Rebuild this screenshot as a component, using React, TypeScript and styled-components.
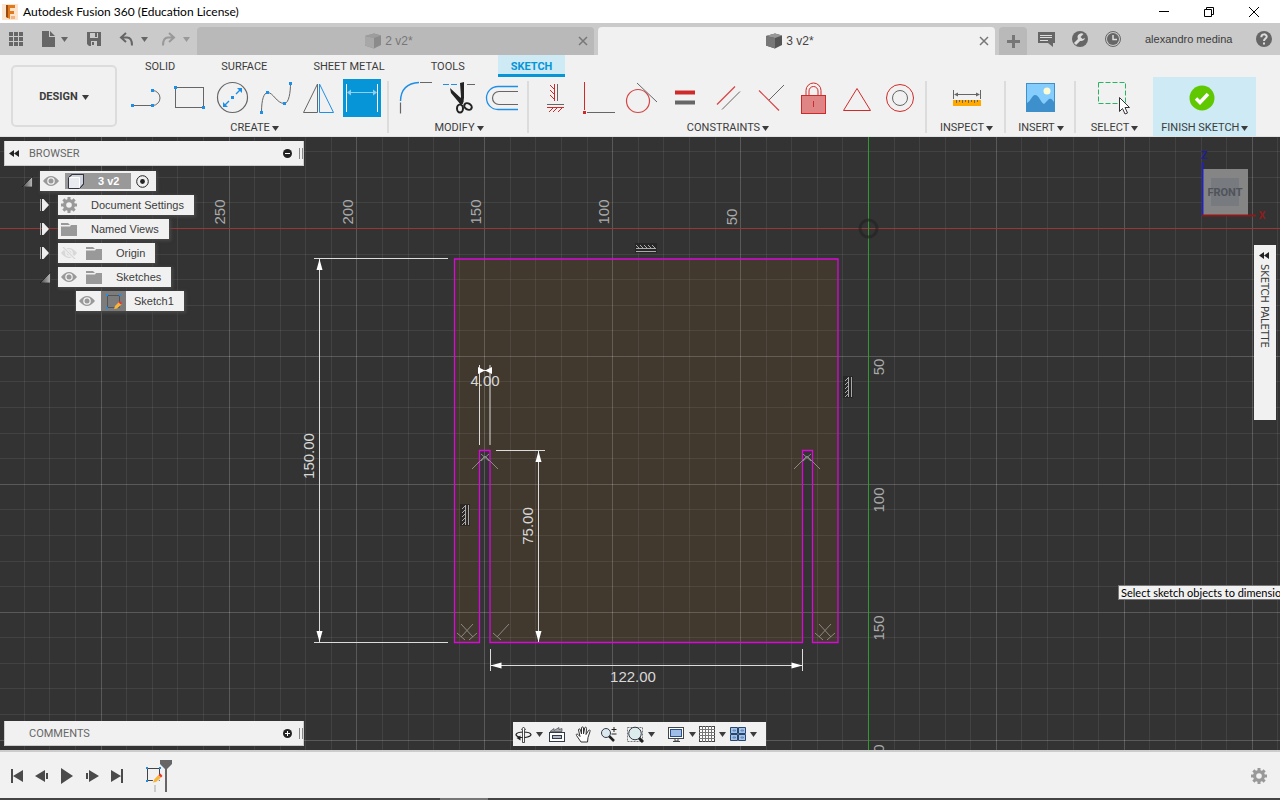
import React from "react";
import styled, { createGlobalStyle, css } from "styled-components";

const sans = `"Liberation Sans", Arial, sans-serif`;
const caps = `Roboto, "Liberation Sans", sans-serif`;
const system = `Lato, "Open Sans", sans-serif`;
const blue = "#0696d7";
const ink = "#3c3c3c";
const grey = "#666666";

const GlobalStyle = createGlobalStyle`
  * { box-sizing: border-box; }
  html, body, #root { height: 100%; }
  body { margin: 0; font: 11px/14px ${sans}; color: ${ink}; background: #333; }
  button { font: inherit; color: inherit; border: 0; padding: 0; margin: 0; background: none; cursor: pointer; }
  svg { display: block; flex: none; }
  ul { list-style: none; margin: 0; padding: 0; }
`;

const Window = styled.div`
  display: flex;
  flex-direction: column;
  min-height: 100%;
  overflow: hidden;
`;

/* ---------- title bar ---------- */
const TitleBar = styled.header`
  display: flex;
  align-items: center;
  height: 23px;
  padding: 0 4px 0 2px;
  background: #fff;
  color: #000;
`;
const Title = styled.h1`
  flex: 1;
  margin: 0 0 0 5px;
  font: 12px/16px ${system};
`;
const WindowButtons = styled.div`
  display: flex;
`;
const WindowButton = styled.button`
  display: grid;
  place-items: center;
  width: 45px;
  height: 22px;
`;

/* ---------- document tabs ---------- */
const TabBar = styled.div`
  display: flex;
  align-items: flex-end;
  height: 32px;
  background: #cacaca;
`;
const QuickTools = styled.div`
  display: flex;
  align-items: center;
  width: 197px;
  height: 32px;
  padding-left: 8px;
`;
const QuickButton = styled.button<{ $w: number; $dim?: boolean }>`
  display: flex;
  align-items: center;
  gap: 6px;
  width: ${(p) => p.$w}px;
  height: 24px;
  color: ${(p) => (p.$dim ? "#999" : grey)};
`;
const DocTab = styled.div<{ $active?: boolean }>`
  display: flex;
  flex: 1;
  align-items: center;
  height: 28px;
  margin-right: 4px;
  padding: 0 3px 0 7px;
  border-radius: 4px 4px 0 0;
  background: ${(p) => (p.$active ? "#f1f1f1" : "#b9b9b9")};
  color: ${(p) => (p.$active ? "#444" : "#777")};
`;
const DocName = styled.button`
  display: flex;
  flex: 1;
  align-items: center;
  justify-content: center;
  gap: 4px;
  font-size: 12px;
`;
const AddTab = styled.button`
  display: grid;
  place-items: center;
  width: 28px;
  height: 28px;
  border-radius: 4px 4px 0 0;
  background: #b9b9b9;
`;
const Account = styled.div`
  display: flex;
  align-items: center;
  gap: 16px;
  width: 253px;
  height: 32px;
  padding: 0 8px 0 11px;
`;
const IconButton = styled.button`
  display: grid;
  place-items: center;
  min-width: 17px;
  height: 20px;
`;
const UserName = styled(IconButton)`
  margin: 0 auto 0 8px;
`;

/* ---------- ribbon ---------- */
const Ribbon = styled.section`
  display: flex;
  height: 82px;
  background: #f1f1f1;
  font-family: ${caps};
  border-bottom: 1px solid #dfe3e3;
`;
const Workspace = styled.button`
  display: flex;
  align-items: center;
  justify-content: center;
  gap: 4px;
  width: 106px;
  height: 62px;
  margin: 10px 11px 0;
  padding-top: 2px;
  border: 2px solid #dcdcdc;
  border-radius: 5px;
  font-weight: 700;
`;
const RibbonBody = styled.div`
  flex: 1;
  display: flex;
  flex-direction: column;
`;
const RibbonTabs = styled.nav`
  display: flex;
  gap: 20px;
  height: 22px;
  padding-left: 4px;
`;
const RibbonTab = styled.button<{ $active?: boolean }>`
  padding: 4px 13px 0;
  border-bottom: 3px solid transparent;
  ${(p) =>
    p.$active &&
    css`
      background: #cdeaf5;
      border-color: ${blue};
      color: ${blue};
      font-weight: 700;
    `}
`;
const Groups = styled.div`
  display: flex;
  flex: 1;
`;
const Group = styled.div<{ $pad?: number; $first?: boolean; $last?: boolean; $finish?: boolean }>`
  display: flex;
  flex-direction: column;
  align-items: center;
  justify-content: space-between;
  padding: 2px ${(p) => p.$pad ?? 8}px 1px ${(p) => (p.$first ? 0 : p.$pad ?? 8)}px;
  background: ${(p) => (p.$finish ? "#cdeaf5" : "linear-gradient(#dcdcdc, #dcdcdc) right 4px / 2px 52px no-repeat")};
  ${(p) => p.$last && "background: none;"}
`;
const IconRow = styled.div`
  display: flex;
  gap: 5px;
`;
const ToolButton = styled.button<{ $active?: boolean }>`
  display: grid;
  place-items: center;
  width: 38px;
  height: 38px;
  background: ${(p) => (p.$active ? blue : "none")};
`;
const GroupLabel = styled.button`
  display: flex;
  align-items: center;
  gap: 2px;
  white-space: nowrap;
`;

/* ---------- canvas ---------- */
const Canvas = styled.main`
  position: relative;
  flex: 1;
  min-height: 613px;
  overflow: hidden;
  background: #333;
`;
const Drawing = styled.svg`
  position: absolute;
  inset: 0;
  width: 100%;
  height: 100%;
  text { font: 15px ${sans}; text-anchor: middle; dominant-baseline: central; }
`;
const Side = styled.aside`
  position: absolute;
  left: 4px;
  top: 4px;
  width: 300px;
`;
const CommentsDock = styled(Side)`
  top: auto;
  bottom: 4px;
`;
const PanelHead = styled.div`
  display: flex;
  align-items: center;
  height: 25px;
  background: #f1f1f1;
  border: 1px solid #ccc;
  border-top: 0;
  color: ${grey};
`;
const Collapse = styled.div`
  width: 24px;
  padding-left: 4px;
`;
const PanelTitle = styled.h2`
  flex: 1;
  margin: 0;
  padding-top: 1px;
  font: 11px/14px ${caps};
`;
const Grip = styled.span`
  width: 4px;
  height: 11px;
  margin-left: 3px;
  border: solid #888;
  border-width: 0 1px;
`;
const Tree = styled.ul`
  display: flex;
  flex-direction: column;
  gap: 4px;
  padding-top: 5px;
`;
const TreeItem = styled.li<{ $level: number }>`
  display: flex;
  align-items: center;
  height: 20px;
  padding-left: ${(p) => p.$level * 18}px;
`;
const Twisty = styled.button`
  display: flex;
  align-items: center;
  width: 18px;
  height: 20px;
`;
const NodeBox = styled.div`
  display: flex;
  align-items: center;
  height: 20px;
  background: #f1f1f1;
  box-shadow: 1px 1px 3px 1px #484848;
`;
const Cell = styled.span<{ $dark?: boolean }>`
  display: grid;
  place-items: center;
  width: 25px;
  height: 20px;
  padding-right: ${(p) => (p.$dark ? 0 : 3)}px;
  background: ${(p) => (p.$dark ? "#7c7c7c" : "none")};
`;
const NodeName = styled.button`
  padding: 0 10px 0 8px;
  white-space: nowrap;
`;
const ActiveNode = styled.button`
  display: flex;
  align-items: center;
  gap: 14px;
  width: 66px;
  height: 16px;
  background: #999;
  color: #fff;
  font-weight: 700;
`;
const Palette = styled.button`
  position: absolute;
  right: 4px;
  top: 108px;
  display: flex;
  flex-direction: column;
  align-items: center;
  gap: 5px;
  width: 22px;
  height: 175px;
  padding: 7px 2px 0 0;
  background: #f1f1f1;
  span { writing-mode: vertical-rl; font: 11px/14px "DejaVu Sans Condensed", "DejaVu Sans", sans-serif; }
`;
const ViewCube = styled.svg`
  position: absolute;
  right: 8px;
  top: 10px;
  text { font: 700 11px ${caps}; text-anchor: middle; dominant-baseline: central; }
`;
const Tooltip = styled.div`
  position: absolute;
  left: calc(100% - 162px);
  top: 448px;
  padding: 0 2px;
  border: 1px solid #777;
  border-right: 0;
  background: #f1f1f1;
  color: #000;
  white-space: nowrap;
  font: 11px/13px ${system};
`;
const NavBar = styled.div`
  position: absolute;
  left: 50%;
  bottom: 4px;
  margin-left: -127px;
  display: flex;
  align-items: center;
  width: 253px;
  height: 24px;
  padding-left: 2px;
  background: #f1f1f1;
`;
const NavButton = styled.button<{ $w: number }>`
  display: flex;
  align-items: center;
  gap: 4px;
  width: ${(p) => p.$w}px;
  height: 24px;
`;

/* ---------- timeline ---------- */
const Timeline = styled.footer`
  display: flex;
  align-items: center;
  height: 48px;
  padding: 2px 13px 0 4px;
  border-top: 2px solid #ccc;
  background: #f1f1f1;
`;
const PlayButton = styled.button`
  display: grid;
  place-items: center;
  width: 25px;
  height: 24px;
`;
const Features = styled.div`
  flex: 1;
  padding-left: 14px;
`;
const Edge = styled.div`
  height: 2px;
  background: linear-gradient(#777, #777) 440px 0 / 48px 2px no-repeat #444;
`;

/* ---------- small glyphs ---------- */
const Caret = ({ c = "currentColor" }: { c?: string }) => (
  <svg width="7" height="5" viewBox="0 0 7 5"><path d="M0 0h7L3.500 5z" fill={c} /></svg>
);
const Rewind = () => (
  <svg width="10" height="7" viewBox="0 0 10 7" fill="#222"><path d="M5 0v7L0 3.500zM10 0v7L5 3.500z" /></svg>
);
const Cube = ({ active }: { active?: boolean }) => (
  <svg width="16" height="16" viewBox="0 0 16 16">
    <path d="M0 3 9 0.500 16 2.500V12L9 15.500 0 12.500z" fill={active ? "#555" : "#8b8b8b"} />
    <path d="M0 3 9 0.500 16 2.500 9 5z" fill={active ? "#999" : "#9d9d9d"} />
    <path d="M0 3 9 5v10.500L0 12.500z" fill={active ? "#777" : "#a8a8a8"} />
  </svg>
);
const Cross = () => (
  <svg width="10" height="10" viewBox="0 0 10 10" stroke="#777" strokeWidth="1.500"><path d="M1 1l8 8M9 1 1 9" /></svg>
);
const Eye = ({ off }: { off?: boolean }) => (
  <svg width="16" height="12" viewBox="0 0 16 12" fill={off ? "#d8d8d8" : "#999"}>
    <path fillRule="evenodd" d="M0 6Q8-4 16 6 8 16 0 6zM8 2.200a3.800 3.800 0 1 0 0 7.600 3.800 3.800 0 0 0 0-7.600z" />
    <circle cx="8" cy="6" r="2.500" />
    {off && <path d="M2 0l12 12" stroke="#f1f1f1" strokeWidth="3" />}
    {off && <path d="M2 0l12 12" stroke="#d8d8d8" strokeWidth="1.200" />}
  </svg>
);
const Folder = () => (
  <svg width="16" height="13" viewBox="0 0 16 13" fill="#999"><path d="M0 0h7l2 2H0zM0 3.500h9L10 2h6v11H0z" /></svg>
);
const Gear = () => (
  <svg width="16" height="16" viewBox="-8 -8 16 16">
    {[0, 45, 90, 135].map((a) => (
      <rect key={a} x="-1.500" y="-8" width="3" height="16" fill="#999" transform={`rotate(${a})`} />
    ))}
    <circle r="4.400" fill="none" stroke="#999" strokeWidth="3.200" />
    <circle r="2.800" fill="#f1f1f1" />
  </svg>
);
const SketchGlyph = () => (
  <svg width="17" height="17" viewBox="0 0 17 17">
    <path d="M2.500 2.500h12v12h-12z" fill="none" stroke="#555" />
    <path d="M1 1h2v2H1zM14 1h2v2h-2zM1 14h2v2H1z" fill="#1e8fe6" />
    <path d="M9 16l1-3 4-4 2.500 2.500L12 15.500z" fill="#f7b53c" />
    <path d="M13.500 9.500 15 8l2 2-1.200 1.500z" fill="#e33" />
  </svg>
);
const Open = () => (
  <svg width="11" height="11" viewBox="0 0 11 11">
    <defs><linearGradient id="tw"><stop offset="0" stopColor="#444" /><stop offset="1" stopColor="#bbb" /></linearGradient></defs>
    <path d="M0 11 10.500 0.500v10.500z" fill="url(#tw)" stroke="#111" strokeWidth="0.600" />
  </svg>
);
const Closed = () => (
  <svg width="10" height="12" viewBox="0 0 10 12" fill="#eee"><path d="M0 0h1v12H0z" fill="#aaa" /><path d="M2 0h1.500L9 6l-5.500 6H2z" /></svg>
);

/* ---------- ribbon icons, 38 x 38 ---------- */
const K = "#666";
const B = "#1e8fe6";
const R = "#cf2a2a";
const L = "#d64545";
const Dot = ({ x, y, c = B }: { x: number; y: number; c?: string }) => (
  <rect x={x - 1.5} y={y - 1.5} width="3" height="3" fill={c} />
);
const Tool = ({ children }: { children: React.ReactNode }) => (
  <svg width="38" height="38" viewBox="0 0 38 38" fill="none" stroke={K} strokeWidth="1">{children}</svg>
);

const createTools: [string, React.ReactNode][] = [
  ["Line", <><path d="M4.500 26.500h20a7.500 7.500 0 0 0 0-15" /><g stroke="none"><Dot x={4.5} y={26.5} /><Dot x={24.5} y={26.5} /><Dot x={24.5} y={11.5} /></g></>],
  ["Rectangle", <><rect x="4.500" y="8.500" width="28" height="20" /><g stroke="none"><Dot x={4.5} y={8.5} /><Dot x={32.5} y={28.5} /></g></>],
  ["Circle", <><circle cx="18.500" cy="18.500" r="15" strokeWidth="1.200" /><path d="M11 26l4-4M22 15l4-4" stroke={B} strokeWidth="1.400" /><g stroke="none"><Dot x={18.5} y={18.5} /><path d="M9 28v-5l5 5zM28 9v5l-5-5z" fill={B} /></g></>],
  ["Spline", <><path d="M4.500 33.500C4.500 20 7 14 10.500 13.500c6 0 9 11 17 11C32 24 33.500 13 33.500 4.500" /><g stroke="none"><Dot x={4.5} y={33.5} /><Dot x={10.5} y={13.5} /><Dot x={27.5} y={24.5} /><Dot x={33.5} y={4.5} /></g></>],
  ["Mirror", <><path d="M17.500 5v28.500H3.500z" /><path d="M19.500 5v28.500h14z" stroke={B} /></>],
  ["Sketch Dimension", <><path d="M3.500 5v28M34.500 5v28" stroke="#fff" /><path d="M5 13.500h28" stroke="#8fd0f2" /><path d="M4 13.500l4-3v6zM34 13.500l-4-3v6z" fill="#8fd0f2" stroke="none" /></>],
];
const modifyTools: [string, React.ReactNode][] = [
  ["Fillet", <><path d="M3.500 23.500v11M23 3.500h12" strokeWidth="1.200" /><path d="M3.500 22Q4 4.500 22 3.500" stroke={B} strokeWidth="1.400" /></>],
  ["Trim", <><path d="M3 5.500h16" stroke={B} strokeDasharray="6 2" /><path d="M27 5.500h8" /><path d="M20 4l4-1v16l-1 6-4-1 2-6zM10 9l14 13-3 4-10-12z" fill="#222" stroke="none" /><ellipse cx="20" cy="29.500" rx="3" ry="4" stroke="#222" strokeWidth="2" /><ellipse cx="28" cy="27.500" rx="4" ry="3" stroke="#222" strokeWidth="2" transform="rotate(30 28 27.500)" /></>],
  ["Offset", <><path d="M35 7.500H15a11.500 11.500 0 0 0 0 23h20" stroke={B} strokeWidth="1.300" /><path d="M35 12.500H16a6.500 6.500 0 0 0 0 13h19" strokeWidth="1.200" /></>],
];
const constraintTools: [string, React.ReactNode][] = [
  ["Horizontal/Vertical", <g transform="translate(10 0)"><path d="M10.500 5v17" /><path d="M7.500 5v17M3 6l4 4M3 11l4 4M3 16l4 4" stroke={R} /><path d="M0 25.500h17" /><path d="M0 28.500h17M6 29l-4 4M10 29l-4 4M15 29l-4 4" stroke={R} /></g>],
  ["Coincident", <><path d="M4.500 3v28" stroke={R} /><path d="M7 33.500h28" /><g stroke="none"><Dot x={4.5} y={33.5} c={R} /></g></>],
  ["Tangent", <><circle cx="15" cy="22" r="11.500" stroke={L} strokeWidth="1.200" /><path d="M14 4l20 19" /></>],
  ["Equal", <><path d="M9 13.500h20" stroke={R} strokeWidth="4" /><path d="M9 23.500h20" strokeWidth="4" /></>],
  ["Parallel", <><path d="M8 25.500 26 7.500" stroke={L} strokeWidth="1.200" /><path d="M13 30.500l18-18" /></>],
  ["Perpendicular", <><path d="M7 11.500l20 20" stroke={L} strokeWidth="1.200" /><path d="M17 21 32 6" /></>],
  ["Fix/UnFix", <><rect x="6.500" y="16.500" width="24" height="18" fill="#e08585" stroke={R} /><path d="M11 16v-4.500a7.500 7.500 0 0 1 15 0V16M14 16v-4a4.500 4.500 0 0 1 9 0v4" stroke={R} /><path d="M18.500 22v6" stroke={R} /></>],
  ["MidPoint", <path d="M19 9.500 5.500 31.500h27z" stroke={R} />],
  ["Concentric", <><circle cx="19" cy="19" r="13.500" stroke={R} /><circle cx="19" cy="19" r="7.500" /></>],
];
const inspectTool: [string, React.ReactNode][] = [
  ["Measure", <><path d="M5.500 11v9M32.500 11v9M7 15.500h24" /><path d="M6 15.500l4-2v4zM32 15.500l-4-2v4z" fill={K} stroke="none" /><path d="M5 21h28v6H5z" fill="#ffa800" stroke="none" /><path d="M8.500 21v3M11.500 21v2M14.500 21v3M17.500 21v2M20.500 21v3M23.500 21v2M26.500 21v3M29.500 21v2" /></>],
];
const insertTool: [string, React.ReactNode][] = [
  ["Insert image", <><rect x="4.500" y="4.500" width="28" height="28" fill="#84cdfc" stroke="#3d90cc" /><circle cx="25" cy="12" r="3.500" fill="#fdfbd4" stroke="none" /><path d="M5 24c4-2 5-8 8-8 4 0 6 8 9 9l5-5c2-1 3 0 5 3v9H5z" fill="#3d90cc" stroke="none" /></>],
];
const selectTool: [string, React.ReactNode][] = [
  ["Select", <><rect x="3.500" y="3.500" width="27" height="21" stroke="#28b463" strokeDasharray="5 2" /><path d="M24.500 18.500v14l3-3 2.500 5.500 2.500-1-2.500-5.500h4.500z" fill="#fff" stroke="#333" /></>],
];
const finishTool: [string, React.ReactNode][] = [
  ["Finish", <><circle cx="16" cy="19" r="12.500" fill="#60c800" stroke="none" /><path d="M10 19.500l4 4 8-8.500" stroke="#fff" strokeWidth="3.500" /></>],
];

type GroupDef = { label: string; tools: [string, React.ReactNode][]; pad?: number; first?: boolean; last?: boolean; finish?: boolean };
const groups: GroupDef[] = [
  { label: "CREATE", tools: createTools, first: true },
  { label: "MODIFY", tools: modifyTools },
  { label: "CONSTRAINTS", tools: constraintTools },
  { label: "INSPECT", tools: inspectTool, pad: 13 },
  { label: "INSERT", tools: insertTool, pad: 12 },
  { label: "SELECT", tools: selectTool, pad: 15, last: true },
  { label: "FINISH SKETCH", tools: finishTool, pad: 8, finish: true },
];

/* ---------- sketch drawing ---------- */
const steps = Array.from({ length: 110 }, (_, i) => i - 40);
const Grid = () => (
  <g shapeRendering="crispEdges">
    {steps.map((i) => {
      const at = Math.round(i * 25.58);
      const c = i % 5 === 0 ? "#fff" : "#ddd";
      const o = i % 5 === 0 ? 0.19 : 0.09;
      return (
        <g key={i} fill={c} fillOpacity={o}>
          <rect x={868 + at} y="0" width="1" height="4000" />
          <rect x="0" y={228 + at} width="4000" height="1" />
        </g>
      );
    })}
  </g>
);
const Arrow = ({ x, y, a }: { x: number; y: number; a: number }) => (
  <path d="M0 0-3 11H3z" fill="#fff" stroke="none" transform={`translate(${x} ${y}) rotate(${a})`} />
);
const Label = ({ x, y, v, children }: { x: number; y: number; v?: boolean; children: string }) => (
  <text y="-1" transform={`translate(${x} ${y})${v ? " rotate(-90)" : ""}`}>{children}</text>
);
const Perp = ({ x, flip }: { x: number; flip?: boolean }) => (
  <path d="M-10 1l8 7M-6 5 6-8" transform={`translate(${x} 632)${flip ? " scale(-1 1)" : ""}`} />
);
const Hatch = ({ x, y, v }: { x: number; y: number; v?: boolean }) => (
  <g transform={`translate(${x} ${y})${v ? " rotate(-90)" : ""}`}>
    <rect x="-11" y="-5" width="22" height="10" fill="#222" fillOpacity="0.700" stroke="none" />
    <path d="M-10 0.500h20M-10 3.500h20M-10-3l3 3M-6-3l3 3M-2-3l3 3M2-3l3 3M6-3l3 3" stroke="#aaa" />
  </g>
);
const SlotMark = ({ x }: { x: number }) => (
  <path d="M-13 11 0-2M13 11 0-2M-4-4l8 7M4-4l-8 7" transform={`translate(${x} 458)`} />
);

const SketchDrawing = () => (
  <Drawing aria-label="Sketch1">
    <g transform="translate(0 -137)" fill="none">
      <path d="M454 259H838V642H812V451H802V642H490V451H480V642H454z" fill="#41382e" />
      <Grid />
      <path d="M0 228.500h4000" stroke="#9a3636" />
      <path d="M868.500 0v4000" stroke="#2f9a2f" />
      <circle cx="868.500" cy="228.500" r="8.500" stroke="#222" strokeOpacity="0.600" strokeWidth="3" />
      <g fill="#aaa">
        {["50", "100", "150", "200", "250"].map((t, i) => (
          <Label key={t} x={732 - i * 128} y={i === 0 ? 217 : 212} v>{t}</Label>
        ))}
        <Label x={879} y={367} v>50</Label>
        <Label x={879} y={500} v>100</Label>
        <Label x={879} y={628} v>150</Label>
        <Label x={879} y={757} v>200</Label>
      </g>
      <path d="M454.500 259V642.500H479.500V450.500H490V642.500H802.500V450.500H812.500V642.500H838V259z" stroke="#d80ad8" strokeWidth="1.300" />
      <g stroke="#8a8a86">
        <SlotMark x={485} /><SlotMark x={807} />
        <Perp x={467} /><Perp x={467} flip /><Perp x={503} /><Perp x={825} /><Perp x={825} flip />
      </g>
      <Hatch x={646} y={248} /><Hatch x={465} y={515} v /><Hatch x={848} y={387} v />
      <g stroke="#dcdcdc">
        <path d="M314 258.500h134M314 642.500h134M319.500 259v383" />
        <path d="M479.500 365v80M490 365v80M479 370.500h12" />
        <path d="M496 450.500h49M538.500 451v191" />
        <path d="M490.500 649v22M802.500 649v22M490 665.500h312" />
        <Arrow x={319.5} y={259} a={0} /><Arrow x={319.5} y={642} a={180} />
        <Arrow x={538.5} y={451} a={0} /><Arrow x={538.5} y={642} a={180} />
        <Arrow x={490.5} y={665.5} a={-90} /><Arrow x={802.5} y={665.5} a={90} />
        <path d="M478 367l7 3.500-7 3.500zM492 367l-7 3.500 7 3.500z" fill="#fff" stroke="none" />
      </g>
      <g fill="#d8d8d8">
        <Label x={309} y={456} v>150.00</Label>
        <Label x={528} y={526} v>75.00</Label>
        <Label x={485} y={381}>4.00</Label>
        <Label x={633} y={677}>122.00</Label>
      </g>
    </g>
  </Drawing>
);

const treeRows = [
  { name: "Document Settings", closed: true, icons: [<Gear key="g" />] },
  { name: "Named Views", closed: true, icons: [<Folder key="f" />] },
  { name: "Origin", closed: true, icons: [<Eye key="e" off />, <Folder key="f" />] },
  { name: "Sketches", closed: false, icons: [<Eye key="e" />, <Folder key="f" />] },
];

const NodeTwist = ({ open }: { open?: boolean }) => (
  <Twisty aria-label={open ? "Collapse" : "Expand"}>{open ? <Open /> : <Closed />}</Twisty>
);

export default function App() {
  return (
    <Window>
      <GlobalStyle />
      <TitleBar>
        <svg width="16" height="16" viewBox="0 0 16 16">
          <rect width="16" height="16" fill="#fbe3cd" />
          <path d="M4 1h9v3H8v3h4v3H8v5l-4-2z" fill="#e07a1c" />
          <path d="M4 1h2v13l-2-1z" fill="#9a4a10" />
          <path d="M9 12h4v3H9z" fill="#f2b47c" />
        </svg>
        <Title>Autodesk Fusion 360 (Education License)</Title>
        <WindowButtons>
          <WindowButton aria-label="Minimize"><svg width="10" height="10" viewBox="0 0 10 10" stroke="#000"><path d="M0 4.500h10" /></svg></WindowButton>
          <WindowButton aria-label="Restore"><svg width="10" height="10" viewBox="0 0 10 10" fill="none" stroke="#000"><path d="M0.500 2.500h7v7h-7zM2.500 2.500v-2h7v7h-2" /></svg></WindowButton>
          <WindowButton aria-label="Close"><svg width="10" height="10" viewBox="0 0 10 10" stroke="#000"><path d="M0 0l10 10M10 0 0 10" /></svg></WindowButton>
        </WindowButtons>
      </TitleBar>

      <TabBar>
        <QuickTools>
          <QuickButton $w={33} aria-label="Data panel">
            <svg width="15" height="15" viewBox="0 0 15 15" fill={grey}>
              {[0, 5, 10].map((x) => [0, 5, 10].map((y) => <rect key={x + "-" + y} x={x + 1} y={y} width="4" height="4" />))}
            </svg>
          </QuickButton>
          <QuickButton $w={45} aria-label="File">
            <svg width="14" height="16" viewBox="0 0 14 16" fill={grey}><path d="M1 0h7v6h6v10H1zM9 0l5 5H9z" /></svg><Caret />
          </QuickButton>
          <QuickButton $w={33} aria-label="Save">
            <svg width="15" height="15" viewBox="0 0 15 15"><path d="M1 0h14v14H3l-2-2z" fill={grey} /><path d="M4 1h8v5H4zM5 9h6v5H5z" fill="#cacaca" /><path d="M9 1h2v4H9zM6 10h2v3H6z" fill={grey} /></svg>
          </QuickButton>
          <QuickButton $w={42} aria-label="Undo">
            <svg width="16" height="14" viewBox="0 0 16 14" fill="none" stroke={grey} strokeWidth="2"><path d="M7 1 2 5.500 7 10M2 5.500h6q5 0 5 8" /></svg><Caret />
          </QuickButton>
          <QuickButton $w={34} $dim aria-label="Redo">
            <svg width="16" height="14" viewBox="0 0 16 14" fill="none" stroke="#999" strokeWidth="2"><path d="M8 1l5 4.500L8 10M13 5.500H7q-5 0-5 8" /></svg><Caret />
          </QuickButton>
        </QuickTools>
        <DocTab><DocName><Cube />2 v2*</DocName><IconButton aria-label="Close 2 v2"><Cross /></IconButton></DocTab>
        <DocTab $active><DocName><Cube active />3 v2*</DocName><IconButton aria-label="Close 3 v2"><Cross /></IconButton></DocTab>
        <AddTab aria-label="New design"><svg width="13" height="13" viewBox="0 0 13 13" stroke="#777" strokeWidth="3"><path d="M6.500 0v13M0 6.500h13" /></svg></AddTab>
        <Account>
          <IconButton aria-label="Notifications">
            <svg width="17" height="15" viewBox="0 0 17 15"><path d="M0 0h17v11h-2v4l-5-4H0z" fill={grey} /><path d="M2 3.500h12M2 5.500h12M2 8.500h8" stroke="#ddd" /></svg>
          </IconButton>
          <IconButton aria-label="Extensions">
            <svg width="16" height="16" viewBox="0 0 16 16"><circle cx="8" cy="8" r="8" fill={grey} /><path d="M3 13l5-5" stroke="#ddd" strokeWidth="3" /><path d="M11.500 3A3.800 3.800 0 1 0 13 7l-2.500 1L8.500 6z" fill="#ddd" /></svg>
          </IconButton>
          <IconButton aria-label="Job status">
            <svg width="16" height="16" viewBox="0 0 16 16"><circle cx="8" cy="8" r="7.500" fill="none" stroke={grey} /><circle cx="8" cy="8" r="6" fill={grey} /><path d="M8 4v4.500h4" fill="none" stroke="#ddd" strokeWidth="1.500" /></svg>
          </IconButton>
          <UserName>alexandro medina</UserName>
          <IconButton aria-label="Help">
            <svg width="16" height="16" viewBox="0 0 16 16"><circle cx="8" cy="8" r="8" fill={grey} /><path d="M5.300 6.300c0-4 5.400-3.600 5.400-0.600C10.700 7.500 8 7.600 8 10M8 11.500v2" fill="none" stroke="#ddd" strokeWidth="2" /></svg>
          </IconButton>
        </Account>
      </TabBar>

      <Ribbon>
        <Workspace>DESIGN <Caret /></Workspace>
        <RibbonBody>
          <RibbonTabs>
            {["SOLID", "SURFACE", "SHEET METAL", "TOOLS", "SKETCH"].map((t) => (
              <RibbonTab key={t} $active={t === "SKETCH"}>{t}</RibbonTab>
            ))}
          </RibbonTabs>
          <Groups>
            {groups.map((g) => (
              <Group key={g.label} $pad={g.pad} $first={g.first} $last={g.last} $finish={g.finish}>
                <IconRow>
                  {g.tools.map(([name, art]) => (
                    <ToolButton key={name} aria-label={name} $active={name === "Sketch Dimension"}><Tool>{art}</Tool></ToolButton>
                  ))}
                </IconRow>
                <GroupLabel>{g.label} <Caret /></GroupLabel>
              </Group>
            ))}
          </Groups>
        </RibbonBody>
      </Ribbon>

      <Canvas>
        <SketchDrawing />
        <Side>
          <PanelHead>
            <Collapse><Rewind /></Collapse>
            <PanelTitle>BROWSER</PanelTitle>
            <IconButton aria-label="Collapse browser"><svg width="9" height="9" viewBox="0 0 9 9"><circle cx="4.500" cy="4.500" r="4.500" fill="#222" /><path d="M2 4.500h5" stroke="#fff" /></svg></IconButton>
            <Grip />
          </PanelHead>
          <Tree>
            <TreeItem $level={1}>
              <NodeTwist open />
              <NodeBox>
                <Cell><Eye /></Cell>
                <ActiveNode>
                  <svg width="19" height="16" viewBox="0 0 19 16" stroke="#334" strokeWidth="1"><path d="M3.500 4.500 7 1.500h11.500v9.500l-4 4.500h-11z" fill="#cfd3dc" /><path d="M3.500 4.500h11v11h-11z" fill="#e9ebf0" stroke="#fff" /><path d="M3.500 4.500v11h11l4-4.500V1.500H7z" fill="none" /></svg>
                  3 v2
                </ActiveNode>
                <Cell><svg width="13" height="13" viewBox="0 0 13 13"><circle cx="6.500" cy="6.500" r="5.800" fill="none" stroke="#222" /><circle cx="6.500" cy="6.500" r="2.400" fill="#222" /></svg></Cell>
              </NodeBox>
            </TreeItem>
            {treeRows.map((r) => (
              <TreeItem key={r.name} $level={2}>
                <NodeTwist open={!r.closed} />
                <NodeBox>
                  {r.icons.map((ic, i) => <Cell key={i}>{ic}</Cell>)}
                  <NodeName>{r.name}</NodeName>
                </NodeBox>
              </TreeItem>
            ))}
            <TreeItem $level={4}>
              <NodeBox>
                <Cell><Eye /></Cell>
                <Cell $dark><SketchGlyph /></Cell>
                <NodeName>Sketch1</NodeName>
              </NodeBox>
            </TreeItem>
          </Tree>
        </Side>

        <ViewCube width="72" height="76" viewBox="1200 147 72 76">
          <rect x="1202" y="169" width="46" height="46" fill="#858585" />
          <rect x="1211" y="178" width="28" height="28" fill="#777a7f" />
          <text x="1225" y="192" fill="#50535a">FRONT</text>
          <path d="M1202.500 162v54" stroke="#2222b4" strokeWidth="2" />
          <path d="M1202 215.500h54" stroke="#8c1a1a" strokeWidth="2" />
          <text x="1204" y="155" fill="#1e1e96">Z</text>
          <text x="1262" y="215" fill="#8c1e1e">X</text>
        </ViewCube>

        <Palette><Rewind /><span>SKETCH PALETTE</span></Palette>
        <Tooltip role="tooltip">Select sketch objects to dimensio</Tooltip>

        <CommentsDock>
          <PanelHead>
            <Collapse />
            <PanelTitle>COMMENTS</PanelTitle>
            <IconButton aria-label="Add comment"><svg width="9" height="9" viewBox="0 0 9 9"><circle cx="4.500" cy="4.500" r="4.500" fill="#222" /><path d="M2 4.500h5M4.500 2v5" stroke="#fff" /></svg></IconButton>
            <Grip />
          </PanelHead>
        </CommentsDock>

        <NavBar>
          <NavButton $w={33} aria-label="Orbit">
            <svg width="17" height="17" viewBox="0 0 17 17" fill="none" stroke="#222"><path d="M5 11.500h5q6-1 6-3Q15 6 8.500 6T1 8.500q0 1.500 3 2.500" strokeWidth="1.200" /><path d="M9.500 16.500V3.500l1 0-2-2.500-2 2.500 1 0v13z" fill="#fff" strokeWidth="0.800" /><path d="M1.500 12l4-2.500v5z" fill="#222" stroke="none" /></svg><Caret />
          </NavButton>
          <NavButton $w={27} aria-label="Look at">
            <svg width="17" height="17" viewBox="0 0 17 17" fill="#fff" stroke="#333a4a"><rect x="1.500" y="6.500" width="15" height="9" /><rect x="4.500" y="9.500" width="9" height="3" fill="#b4bac6" /><path d="M2 5.500l4-3v2l5-3v2l3-1v3z" fill="#aaa" strokeWidth="0.600" /></svg>
          </NavButton>
          <NavButton $w={25} aria-label="Pan">
            <svg width="17" height="17" viewBox="0 0 17 17" fill="#fff" stroke="#333" strokeWidth="1"><path d="M6 16 1.500 9.500C0.500 8 2.500 7.500 3.500 9L5 10.500 3.500 4c0-1.500 1.700-1.500 2 0L6.500 8V2c0-1.500 2-1.500 2 0v6l1.200-6c0.300-1.300 2-1 1.800 0.500L11 8.500 13.500 4.500c0.800-1 2.200-0.300 1.500 1L13 11.500 12.500 16z" /></svg>
          </NavButton>
          <NavButton $w={27} aria-label="Zoom">
            <svg width="17" height="17" viewBox="0 0 17 17" fill="none"><path d="M9 10l5 5" stroke="#222" strokeWidth="2.500" /><circle cx="6" cy="7" r="4.500" fill="#dbe9ee" stroke="#333a4a" /><path d="M11.500 3.500h5M14 1v5M11.500 8h5" stroke="#222" /></svg>
          </NavButton>
          <NavButton $w={41} aria-label="Fit">
            <svg width="17" height="17" viewBox="0 0 17 17" fill="none"><rect x="0.500" y="1.500" width="15" height="14" stroke="#777" strokeDasharray="2 1" /><path d="M11 11l5 5" stroke="#222" strokeWidth="3" /><circle cx="8" cy="7.500" r="6.300" fill="#dcebeb" stroke="#333a4a" /></svg><Caret />
          </NavButton>
          <NavButton $w={31} aria-label="Display settings">
            <svg width="17" height="17" viewBox="0 0 17 17" fill="#fff" stroke="#444"><rect x="0.500" y="1.500" width="15" height="11" /><rect x="2.500" y="3.500" width="11" height="7" fill="#9fbde6" stroke="#27508c" /><path d="M5 15.500h7M7 13v2h3v-2" /></svg><Caret />
          </NavButton>
          <NavButton $w={31} aria-label="Grid and snaps">
            <svg width="16" height="16" viewBox="0 0 16 16" fill="#fff" stroke="#777"><rect x="0.500" y="0.500" width="15" height="15" stroke="#444" /><path d="M3.500 0v16M6.500 0v16M9.500 0v16M12.500 0v16M0 3.500h16M0 6.500h16M0 9.500h16M0 12.500h16" /></svg><Caret />
          </NavButton>
          <NavButton $w={30} aria-label="Viewports">
            <svg width="16" height="14" viewBox="0 0 16 14" fill="#a9c3e6" stroke="#24466f"><path d="M0.500 0.500h7v6h-7zM8.500 0.500h7v6h-7zM0.500 7.500h7v6h-7zM8.500 7.500h7v6h-7z" /><path d="M3 3h2.500v1H3zM11 3h2.500v1H11zM3 10h2.500v1H3zM11 10h2.500v1H11z" stroke="#5c87bd" /></svg><Caret />
          </NavButton>
        </NavBar>
      </Canvas>

      <Timeline>
        {[
          ["Go to start", "M0 1h2v14H0zM12 2v12L2 8z"],
          ["Step back", "M9 2v12L-1 8zM10 5h2v6h-2z"],
          ["Play", "M0 0l12 8L0 16z"],
          ["Step forward", "M3 2v12l10-6zM0 5h2v6H0z"],
          ["Go to end", "M0 2v12l10-6zM10 1h2v14h-2z"],
        ].map(([name, d]) => (
          <PlayButton key={name} aria-label={name}><svg width="12" height="16" viewBox="0 0 12 16" overflow="visible" fill="#4a4a4a"><path d={d} /></svg></PlayButton>
        ))}
        <Features>
          <svg width="34" height="34" viewBox="0 0 34 34" role="img" aria-label="Sketch1 in the timeline">
            <path d="M4.500 9.500h12v12h-12z" fill="none" stroke="#444" />
            <path d="M3 8h2v2H3zM16 8h2v2h-2zM3 21h2v2H3z" fill={B} />
            <path d="M9 24.500l1.500-5 5-4 3.500 3.500-6 5z" fill="#f1f1f1" />
            <path d="M10 23.500l1.500-3.500 4-4 2.500 2.500-5 4.500z" fill="#f7b53c" />
            <path d="M15.500 16 17.500 14.500l2 2.500-1.500 1.500z" fill="#e33" />
            <path d="M11 26h2v7h-2z" fill="#ccc" />
            <path d="M17 1h12v4l-5 5v23h-2V10l-5-5z" fill="#666" />
          </svg>
        </Features>
        <IconButton aria-label="Timeline settings"><Gear /></IconButton>
      </Timeline>
      <Edge />
    </Window>
  );
}
